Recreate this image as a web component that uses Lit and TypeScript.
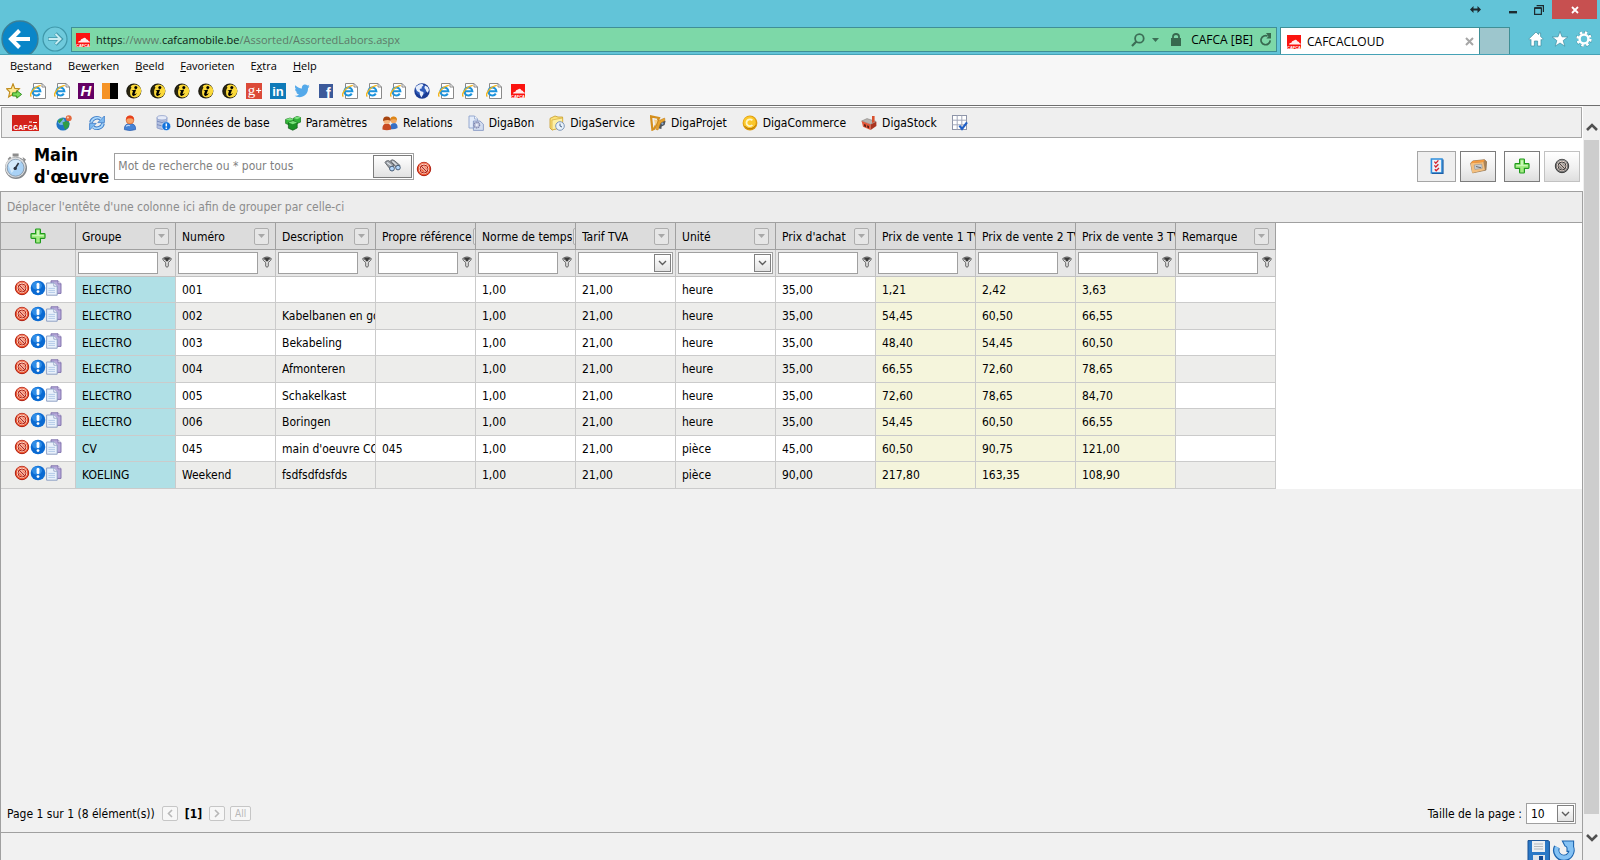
import { LitElement, html, css, svg, TemplateResult } from "lit";
import { customElement, state } from "lit/decorators.js";
import { classMap } from "lit/directives/class-map.js";

type Icon = TemplateResult;

const icon = (body: unknown, size = 16, box = 16): Icon =>
  html`<svg width=${size} height=${size} viewBox="0 0 ${box} ${box}" aria-hidden="true">${body}</svg>`;

/* ---------- browser icons ---------- */
const cafcaTile = () => icon(svg`
  <rect x="1" y="1" width="14" height="14" fill="#fb1410"/>
  <path d="M3 10.6 Q3 9 5.4 8.8 Q5.6 6.6 8 6.4 Q10 5 11.4 7.2 Q13.6 7.6 13.4 9 Q15 9.4 15 10.6 Z" fill="#fff" opacity=".92"/>
  <text x="8" y="15" text-anchor="middle" font-family="Liberation Sans" font-size="4" font-weight="700" fill="#fff">CAFCA</text>`);

const favStar = () => icon(svg`
  <path d="M7 .8 L8.8 5.4 L13.4 5.8 L10 9 L11 13.8 L7 11.2 L2.6 14 L3.8 9 L0.6 5.8 L5.2 5.4 Z" fill="#ffe896" stroke="#c08c1c" stroke-width="1.1"/>
  <path d="M6.6 9.8 h4.2 v-2.2 l4.8 3.8 l-4.8 3.8 v-2.2 h-4.2z" fill="#7bdc5a" stroke="#2b8a1c" stroke-width=".9"/>`);

const iePage = () => icon(svg`
  <path d="M3.5 .5 h8.5 l3.5 3.5 v11.5 h-12z" fill="#fff" stroke="#8a8a8a"/>
  <path d="M12 .5 v3.5 h3.5" fill="none" stroke="#8a8a8a"/>
  <path d="M2.6 8.2 H10.4 A4 4 0 1 0 9.8 10.6" fill="none" stroke="#1d93dc" stroke-width="2"/>
  <path d="M1.4 13.6 C-1.2 11.4 3.4 4 10.8 2.4" fill="none" stroke="#f3b51c" stroke-width="1.3"/>`);

const hTile = () => icon(svg`
  <rect width="16" height="16" fill="#640064"/>
  <text x="8" y="13.4" text-anchor="middle" font-family="Liberation Sans" font-size="15" font-weight="700" font-style="italic" fill="#fff">H</text>`);

const duoTile = () => icon(svg`<rect width="8" height="16" fill="#f59326"/><rect x="8" width="8" height="16" fill="#000"/>`);

const infoBall = () => icon(svg`
  <circle cx="7.8" cy="8" r="7.6" fill="#1c1a10"/><circle cx="8.8" cy="8" r="6.4" fill="#fbd93a"/>
  <path d="M2.6 12.6 Q-.4 7.4 4.4 2.8 L5.4 4.4 Q3 8 4.8 13.4 Z" fill="#2a260e"/>
  <circle cx="9.8" cy="4.4" r="1.5" fill="#000"/>
  <path d="M5.4 7.4 L10.2 6.6 L8.6 10.8 Q9 11.4 11 10 Q9.6 13.2 7.2 13 Q5.6 12.4 6.2 10.6 L7 8.2 Z" fill="#000"/>`);

const gPlus = () => icon(svg`
  <rect width="16" height="16" fill="#dc4a38"/>
  <text x="5.6" y="11.6" text-anchor="middle" font-family="Liberation Serif" font-size="15" fill="#fff">g</text>
  <path d="M10.2 7.5 h5 M12.7 5 v5" stroke="#fff" stroke-width="1.1"/>`);

const linkedIn = () => icon(svg`
  <rect width="16" height="16" fill="#0f7ab8"/>
  <text x="8" y="13" text-anchor="middle" font-family="Liberation Sans" font-size="13" font-weight="700" fill="#fff">in</text>`);

const bird = () => icon(svg`
  <path d="M15.5 3.6 L14 5.2 C14.2 10.6 10 14.2 5.4 14.2 C3.6 14.2 1.9 13.7 .6 12.8 C2.3 13 3.9 12.4 5.1 11.5 C3.7 11.4 2.6 10.5 2.2 9.3 L3.5 9.2 C2 8.8 1 7.6 1 6 L2.3 6.4 C1 5.4 .6 3.6 1.4 2.2 C3 4.1 5.4 5.4 8 5.5 C7.4 2.9 9.4 1.4 11 1.4 C12 1.4 12.8 1.8 13.4 2.4 L15.4 1.7 L14.2 3.3 Z" fill="#54a9ea"/>`);

const faceTile = () => icon(svg`
  <rect x="1" y="1" width="14" height="14" fill="#3c5a9a"/>
  <text x="10.4" y="15" text-anchor="middle" font-family="Liberation Sans" font-size="14" font-weight="700" fill="#fff">f</text>`);

const globe = () => icon(svg`
  <circle cx="8" cy="8" r="7.7" fill="#1b3c94"/><circle cx="7" cy="6.6" r="5.6" fill="#3d6fd2" opacity=".6"/>
  <path d="M1.4 4.6 Q4 .8 8.4 1 L9.4 2.6 L7.6 4 L8 5.2 L5.6 6 L6.4 8 L9.4 9 L9.4 11 L7.4 14.6 L6 12 L5.6 9.4 L3 8 Z M11 2.6 L13.8 4 L15 7 L13.8 9.8 L12.4 8.6 L11.6 6.6 L10.4 5Z" fill="#e6eefc"/>`);

/* ---------- application icons ---------- */
const cafcaLogo = () => html`<svg width="27" height="16" viewBox="0 0 27 16" role="img" aria-label="CAFCA">
  <rect width="27" height="16" fill="#d3221b"/>
  <path d="M17 7 h3 M21 7.5 h4" stroke="#fff" stroke-width="1"/>
  <text x="13.5" y="14.8" text-anchor="middle" font-family="Liberation Sans" font-size="7" font-weight="700" fill="#fff">CAFCA</text></svg>`;

const earth = () => icon(svg`
  <circle cx="7" cy="9" r="6.6" fill="#1f74c6"/><circle cx="5.4" cy="6.6" r="3.4" fill="#9cd2f4" opacity=".7"/>
  <path d="M1.6 6 Q4 2.6 7.4 3.4 L6 5.4 L3.4 8.4 Z M6.4 7.4 L10.6 6 L13.4 8 L12.6 12 L9 15 L8 12 Z" fill="#2f9c46"/>
  <circle cx="12.7" cy="3.3" r="3" fill="#e2683e"/><circle cx="11.9" cy="2.5" r="1.1" fill="#ffcdb0"/>`);

const refresh = () => icon(svg`
  <path d="M2 7.6 A6 5.6 0 0 1 11.6 4" fill="none" stroke="#3a7bc8" stroke-width="3.6"/>
  <path d="M14 8.4 A6 5.6 0 0 1 4.4 12" fill="none" stroke="#3a7bc8" stroke-width="3.6"/>
  <path d="M15.4 1 V7.6 H8.8 Z M.6 15 V8.4 H7.2 Z" fill="#7db9f0" stroke="#3a7bc8" stroke-width=".8"/>
  <path d="M2.2 7.4 A6 5.6 0 0 1 12 4 M13.8 8.6 A6 5.6 0 0 1 4 12" fill="none" stroke="#a9d6fa" stroke-width="1.8"/>`);

const person = () => icon(svg`
  <path d="M2.4 14.6 Q2 8.6 8 8.6 Q14 8.6 13.6 14.6 Q8 16.6 2.4 14.6Z" fill="#4583d6" stroke="#2a5cae" stroke-width=".7"/>
  <circle cx="8" cy="5" r="3.9" fill="#f6a468" stroke="#d8602c" stroke-width=".7"/>
  <path d="M4 5 Q4 .4 8 .4 Q12 .4 12 5 Q10 2.8 8 3.4 Q5.8 2.8 4 5Z" fill="#e8401c"/>
  <path d="M4 11.4 Q6 9.6 8 10.8" fill="none" stroke="#bcd8fa" stroke-width="1.2"/>`);

const database = () => icon(svg`
  <path d="M2 2.6 V13 Q7 16 12 13 V2.6Z" fill="#b3c0e0" stroke="#8495c4" stroke-width=".7"/>
  <ellipse cx="7" cy="2.8" rx="5" ry="2.2" fill="#e6ebf8" stroke="#8495c4" stroke-width=".7"/>
  <path d="M2 6.2 Q7 8.8 12 6.2 M2 9.6 Q7 12.2 12 9.6" fill="none" stroke="#7386ba" stroke-width=".9"/>
  <circle cx="11.3" cy="11.2" r="4.4" fill="#1272dc" stroke="#fff" stroke-width=".5"/>
  <path d="M11.3 8.4 V11.6 M11.3 12.6 V14" stroke="#fff" stroke-width="1.5"/>`);

const cubes = () => icon(svg`
  <path d="M8.6 3 L12 1.4 L15.8 2.6 V7 L12 8.6 L8.6 7Z" fill="#2fb238" stroke="#15701c" stroke-width=".7"/>
  <path d="M.6 4.4 L5 3 L8.6 4.4 V8.6 L4.6 10 L.6 8.4Z" fill="#34b83a" stroke="#15701c" stroke-width=".7"/>
  <path d="M3.4 7.6 L8 6 L12.2 7.6 V13 L7.8 15.2 L3.4 13.2Z" fill="#1b9226" stroke="#0f5a18" stroke-width=".7"/>
  <path d="M3.4 7.6 L7.8 9.2 L12.2 7.6 L8 6Z M.6 4.4 L4.6 5.6 L8.6 4.4 L5 3Z M8.6 3 L12 4.2 L15.8 2.6 L12 1.4Z" fill="#7be07c"/>`);

const people = () => icon(svg`
  <path d="M8 14 Q8 8 11.8 8 Q15.8 8 15.6 13 Q12 15 8 14Z" fill="#3770c6"/>
  <circle cx="11.6" cy="5" r="3.2" fill="#f2a862"/><path d="M8.2 5 Q8.2 1.4 11.6 1.4 Q15 1.4 15 5.4 Q13 3.4 8.2 5Z" fill="#dd8618"/>
  <path d="M.4 14.4 Q.2 8.6 4.8 8.6 Q9.4 8.6 9.2 14.4 Q4.8 16 .4 14.4Z" fill="#c84a22"/>
  <circle cx="4.8" cy="5.6" r="3.5" fill="#f6b47c"/><path d="M1 6 Q1 1.6 4.8 1.6 Q8.6 1.6 8.6 6 Q6.4 3.8 1 6Z" fill="#a64410"/>`);

const gearPages = () => icon(svg`
  <path d="M1 1 h5.6 l3 3 v9 h-8.6z" fill="#e4ecfa" stroke="#8da2cc" stroke-width=".9"/>
  <path d="M6.6 1 v3 h3" fill="#fff" stroke="#8da2cc" stroke-width=".8"/>
  <path d="M5.4 6 h6.6 l3.4 3.2 v6.2 h-10z" fill="#d3ddf0" stroke="#7d91be" stroke-width=".8"/>
  <circle cx="8.8" cy="10" r="2.9" fill="#c2c8e0" stroke="#8087ae" stroke-width="1.2" stroke-dasharray="1.4 .6"/><circle cx="8.8" cy="10" r="1" fill="#f2f5fb"/>`);

const folderClock = () => icon(svg`
  <path d="M1 3.4 L6 1 L9 2 H13.6 V12 L3 15 L1 13Z" fill="#fbe27a" stroke="#c79a26" stroke-width=".8"/>
  <path d="M3 5 L13.6 3 V12 L3 15Z" fill="#fdf0a4" stroke="#d3a93a" stroke-width=".7"/>
  <circle cx="11" cy="11" r="4.3" fill="#e9f2fb" stroke="#7c96b8" stroke-width="1"/><path d="M11 8.6 V11 L13 12" fill="none" stroke="#35557c" stroke-width=".9"/>`);

const projectIcon = () => icon(svg`
  <path d="M1 1.4 L9 3 L7.6 6 L4.4 13.6 L2.4 14.6Z" fill="none" stroke="#d58f1c" stroke-width="2.2"/>
  <path d="M4 4.4 L8 5.4 L5.4 11Z" fill="#f6d088"/>
  <path d="M9 10 L12 5.6 L15.6 6 L14.6 10 L11.6 11.6 L11.4 14 L9 13.6Z" fill="#4e555e"/>
  <path d="M8 6 L14.6 3 L15 5.6 L10.6 8 L8 15 L6 14.4Z" fill="#e8a42c" stroke="#b87414" stroke-width=".5"/><circle cx="12.4" cy="8.6" r="1.1" fill="#8fb0d6"/>`);

const coin = () => icon(svg`
  <circle cx="8" cy="8" r="7.4" fill="#dd9a0c"/><circle cx="7.6" cy="7.4" r="6.2" fill="#fbc82c"/>
  <path d="M10.4 5.4 A3.4 3.4 0 1 0 10.4 10" fill="none" stroke="#fff6c8" stroke-width="1.8"/>
  <path d="M2.6 11 A6.6 6.6 0 0 0 13.6 10.4" fill="none" stroke="#b87806" stroke-width="1"/>`);

const factory = () => icon(svg`
  <path d="M.6 6 L6 3.6 L15 6.4 L9.6 9.4Z" fill="#b8b4b0" stroke="#7a7672" stroke-width=".5"/>
  <path d="M.6 6 L9.6 9.4 V15 L2 11.8Z" fill="#e2573a"/><path d="M9.6 9.4 L15.4 6.4 V11 L9.6 15Z" fill="#a93420"/>
  <path d="M11 1 h2.6 v6 l-2.6 1z" fill="#d8502e"/><path d="M3 9 l2 .8 v2.4 l-2 -.9z M6.2 10.2 l1.8 .7 v2.5 l-1.8 -.8z" fill="#5c2418"/>`);

const gridCheck = () => icon(svg`
  <rect x=".5" y=".5" width="14" height="14" fill="#fff" stroke="#8d94a8"/>
  <path d="M.5 5.2 H14.5 M.5 9.8 H14.5 M5.2 .5 V14.5 M9.8 .5 V14.5" stroke="#a3a9ba" stroke-width="1"/>
  <path d="M7.4 10.6 L10 14 L15 7.4" fill="none" stroke="#1f5fc6" stroke-width="2.2"/>`);

const stopwatch = () => icon(svg`
  <path d="M8.6 .6 h6 v3 h-6z M18.6 4 l3.4 2.4 -2 3z M3.6 6 l2.4 -2.4 2 2 -2 3z" fill="#8d8d8d"/>
  <rect x="10" y="3" width="3.4" height="3" fill="#b4b4b4"/>
  <circle cx="12" cy="15" r="11" fill="#85898d"/><circle cx="11.4" cy="14.4" r="10.2" fill="#dcdee0"/>
  <circle cx="11.6" cy="14.8" r="8.4" fill="#a9d2f6" stroke="#7a8ea2" stroke-width=".8"/>
  <path d="M4.4 12 A8 8 0 0 1 17 8.6 L7.6 20Z" fill="#dff0fd" opacity=".8"/>
  <path d="M10.8 16 L14.6 10" stroke="#2c3440" stroke-width="1.6"/><circle cx="11.2" cy="15.4" r="1.7" fill="#2c3440"/>`, 26, 26);

const forbid = (light = "#ffa48c", main = "#ee5a34", dark = "#b01f12") => icon(svg`
  <circle cx="8" cy="8" r="6.7" fill=${main} stroke=${dark} stroke-width="1"/>
  <ellipse cx="8" cy="4.6" rx="5" ry="3" fill=${light} opacity=".6"/>
  <circle cx="8" cy="8" r="4" fill="none" stroke="#ffe9de" stroke-width="2.2"/>
  <path d="M5 5 L11 11" stroke="#ffe9de" stroke-width="2.6"/>
  <circle cx="8" cy="8" r="4" fill="none" stroke=${dark} stroke-width="1"/>
  <path d="M5.2 5.2 L10.8 10.8" stroke=${dark} stroke-width="1.1"/>`);

const infoBlue = () => icon(svg`
  <circle cx="8" cy="8" r="7.3" fill="#0a6ad2"/><ellipse cx="7" cy="5.6" rx="5" ry="4" fill="#3f9cf0" opacity=".7"/>
  <rect x="6.6" y="3" width="2.8" height="6" rx="1.2" fill="#fff"/><circle cx="8" cy="11.6" r="1.4" fill="#fff"/>`);

const copyPages = () => icon(svg`
  <path d="M5 .8 h7 l3 3 v9.6 h-10z" fill="#b6a9da" stroke="#7a6ca8" stroke-width=".9"/>
  <path d="M12 .8 v3 h3" fill="#efeafa" stroke="#7a6ca8" stroke-width=".8"/>
  <path d="M.6 3 h7.2 l3.4 3.2 v9 h-10.6z" fill="#e9f1fb" stroke="#8698c0" stroke-width=".9"/>
  <path d="M7.8 3 v3.2 h3.4" fill="#fff" stroke="#8698c0" stroke-width=".8"/>
  <path d="M2.4 8.4 h6.6 M2.4 10.4 h6.6 M2.4 12.4 h6.6" stroke="#b3cbe8" stroke-width="1"/>`);

const plus = () => icon(svg`
  <path d="M5.6 1.8 Q5.6 1 6.4 1 H9.6 Q10.4 1 10.4 1.8 V5.6 H14.2 Q15 5.6 15 6.4 V9.6 Q15 10.4 14.2 10.4 H10.4 V14.2 Q10.4 15 9.6 15 H6.4 Q5.6 15 5.6 14.2 V10.4 H1.8 Q1 10.4 1 9.6 V6.4 Q1 5.6 1.8 5.6 H5.6Z" fill="#a4ec84" stroke="#1f9a1c" stroke-width="1.2"/>
  <path d="M7 2.4 H9 V7 H13.6 V8 H2.4 V7 H7Z" fill="#c9f8b8"/>`);

const checklist = () => icon(svg`
  <path d="M2.4 1 H13 V15 H2.4Z" fill="#eef2f8" stroke="#2f8fdc" stroke-width="1.6"/><path d="M14 1.6 V15.4 H3" fill="none" stroke="#1c5fa8" stroke-width="1.2"/>
  <path d="M5.4 3.6 L6.8 5.2 L9.4 2.4 M5.4 7.4 L6.8 9 L9.4 6.2 M5.8 11.2 L7.2 12.8 L10 10" fill="none" stroke="#d3222c" stroke-width="1.3"/>`);

const box = () => icon(svg`
  <path d="M.6 5 L2.4 14 L15 11.4 L15.6 3.4 L13.6 1.6 L2.6 2.8Z" fill="#a9845a" stroke="#8c6a44" stroke-width=".7"/>
  <path d="M.6 5 L12.6 3.8 L14 11.2 L2.2 14Z" fill="#f3c080"/><path d="M.6 5 L2.6 2.8 L14 1.6 L12.6 3.8Z" fill="#f59a3c"/>
  <path d="M4 6.6 L11 5.8 L11.6 9.6 L4.6 10.8Z" fill="#c8cdd2" stroke="#8b8d90" stroke-width=".5"/><path d="M5.6 8 L10.4 9.2" stroke="#666" stroke-width=".9"/>`, 17);

const binoculars = () => icon(svg`
  <path d="M1 4.6 Q1.6 2.4 4.6 2.6 L9.6 6.4 L8.6 12.6 Q6 12.4 4.8 9.4Z M6.4 2.8 Q8 .8 10.4 2.6 L16 7.4 L14 11.6 L10.8 8Z" fill="#999ea4" stroke="#55595f" stroke-width=".8"/>
  <path d="M3 4.4 L7.6 7.8 M8.4 3.2 L12.6 7" stroke="#dfe3e8" stroke-width="1.2"/>
  <circle cx="8" cy="10.6" r="2.4" fill="#b4d6fa" stroke="#3d526c" stroke-width=".9"/><circle cx="14" cy="9.6" r="2.3" fill="#b4d6fa" stroke="#3d526c" stroke-width=".9"/>`, 17, 17);

const filter = () => html`<svg width="10" height="12" viewBox="0 0 10 12" aria-hidden="true">
  <path d="M.7 2.6 Q5 -.6 9.3 2.6 Q9.4 4.4 6.2 6.4 V10.4 Q5 12 3.8 10.4 V6.4 Q.6 4.4 .7 2.6Z" fill="#fff" stroke="#555" stroke-width="1"/>
  <path d="M1.6 2.8 Q5 .2 8.4 2.8 L7.6 3.8 H2.4Z" fill="#3c3c3c"/><circle cx="5" cy="4" r="1.6" fill="#3c3c3c"/></svg>`;

const triangle = () => html`<svg width="7" height="4" viewBox="0 0 7 4" aria-hidden="true"><path d="M0 0 H7 L3.5 4Z" fill="#a8a8a8"/></svg>`;

const chevron = (d: string, color: string, w: number, h: number, sw = 1.4) =>
  html`<svg width=${w} height=${h} viewBox="0 0 ${w} ${h}" aria-hidden="true"><path d=${d} fill="none" stroke=${color} stroke-width=${sw}/></svg>`;

const floppy = () => icon(svg`
  <path d="M1 .6 H21.4 L22.4 1.6 V23 H1Z" fill="#2a78c6" stroke="#174f92" stroke-width="1"/>
  <rect x="5" y="1" width="13" height="11" fill="#eceff2"/><path d="M7 4 H16 M7 6.5 H16 M7 9 H16" stroke="#b4b9be" stroke-width="1"/>
  <rect x="6" y="15" width="12" height="8" fill="#dfe5ea"/><rect x="12" y="16" width="4" height="7" fill="#124a94"/>`, 24, 24);

const undo = () => icon(svg`
  <path d="M5 7 A7.6 7.6 0 1 0 18.6 7" fill="none" stroke="#1c64ae" stroke-width="6.4"/>
  <path d="M10.4 1 H21.6 V11.4 H15 V8 Q15 6.4 13 6Z" fill="#84c2f4" stroke="#1c64ae" stroke-width="1.1"/>
  <path d="M5 7 A7.6 7.6 0 1 0 18.4 6" fill="none" stroke="#84c2f4" stroke-width="4.2"/>`, 24, 24);

/* ---------- data ---------- */
interface Column { label: string; kind?: "select"; tone?: string; }

const columns: Column[] = [
  { label: "Groupe", tone: "blue" },
  { label: "Numéro" },
  { label: "Description" },
  { label: "Propre référence" },
  { label: "Norme de temps" },
  { label: "Tarif TVA", kind: "select" },
  { label: "Unité", kind: "select" },
  { label: "Prix d'achat" },
  { label: "Prix de vente 1 TV", tone: "beige" },
  { label: "Prix de vente 2 TV", tone: "beige" },
  { label: "Prix de vente 3 TV", tone: "beige" },
  { label: "Remarque" },
];

const rows: string[][] = [
  ["ELECTRO", "001", "", "", "1,00", "21,00", "heure", "35,00", "1,21", "2,42", "3,63", ""],
  ["ELECTRO", "002", "Kabelbanen en go", "", "1,00", "21,00", "heure", "35,00", "54,45", "60,50", "66,55", ""],
  ["ELECTRO", "003", "Bekabeling", "", "1,00", "21,00", "heure", "35,00", "48,40", "54,45", "60,50", ""],
  ["ELECTRO", "004", "Afmonteren", "", "1,00", "21,00", "heure", "35,00", "66,55", "72,60", "78,65", ""],
  ["ELECTRO", "005", "Schakelkast", "", "1,00", "21,00", "heure", "35,00", "72,60", "78,65", "84,70", ""],
  ["ELECTRO", "006", "Boringen", "", "1,00", "21,00", "heure", "35,00", "54,45", "60,50", "66,55", ""],
  ["CV", "045", "main d'oeuvre CC", "045", "1,00", "21,00", "pièce", "45,00", "60,50", "90,75", "121,00", ""],
  ["KOELING", "Weekend", "fsdfsdfdsfds", "", "1,00", "21,00", "pièce", "90,00", "217,80", "163,35", "108,90", ""],
];

const reset = css`
  *, *::before, *::after { box-sizing: border-box; }
  svg { display: block; flex: none; }
  button, input, select { font: inherit; color: inherit; margin: 0; padding: 0; border: 0; background: none; border-radius: 0; }
  a { color: inherit; text-decoration: none; }
`;

/* ---------- browser frame ---------- */
@customElement("browser-chrome")
class BrowserChrome extends LitElement {
  static styles = [reset, css`
    :host { display: block; font: 12px/16px "Open Sans", "Noto Sans", sans-serif; color: #000; background: #f7f7f7; border-bottom: 1px solid #6e6e6e; }
    .top { display: flex; height: 55px; background: #62c4d8; border-bottom: 1px solid #46a2b6; overflow: hidden; }
    .nav { display: flex; align-items: center; gap: 3px; height: 58px; padding: 20px 3px 0 1px; }
    .main { display: flex; flex: 1; gap: 3px; padding-top: 27px; min-width: 0; }
    .address { flex: 1; display: flex; align-items: center; gap: 5px; height: 25px; padding: 0 4px 0 3px; background: #7dd8a8; border: 1px solid #3f8f96; min-width: 0; }
    .url { flex: 1; color: #5d7a68; white-space: nowrap; font-size: 11px; }
    .url b { color: #0c1a12; font-weight: 400; }
    .tools { display: flex; align-items: center; gap: 7px; }
    .tab { display: flex; align-items: center; gap: 5px; width: 200px; height: 28px; padding: 0 5px; background: #fff; border: 1px solid #3f8f96; border-bottom: 0; }
    .tab span { flex: 1; }
    .newtab { width: 30px; height: 28px; margin-left: -3px; background: #9dc6cd; border: 1px solid #3f8f96; border-left: 0; border-bottom: 0; }
    .side { display: flex; flex-direction: column; width: 90px; align-items: flex-end; }
    .caption { display: flex; align-items: flex-start; height: 27px; justify-content: flex-end; width: 150px; padding-right: 3px; }
    .caption button { display: flex; align-items: center; justify-content: center; width: 26px; height: 19px; }
    .caption .wide { width: 50px; }
    .caption .close { width: 45px; background: #c75050; }
    .quick { display: flex; gap: 8px; padding: 4px 8px 0 0; }
    .menu { display: flex; gap: 16px; padding: 3px 10px; height: 24px; font-size: 11px; }
    .marks { display: flex; align-items: center; gap: 8px; padding: 0 6px; height: 24px; margin-bottom: 2px; }
    u { text-underline-offset: 1px; }
  `];

  render() {
    const marks = [favStar, iePage, iePage, hTile, duoTile, infoBall, infoBall, infoBall, infoBall, infoBall, gPlus, linkedIn, bird, faceTile, iePage, iePage, iePage, globe, iePage, iePage, iePage, cafcaTile];
    return html`
      <div class="top">
        <div class="nav">
          <button aria-label="Terug"><svg width="38" height="38" viewBox="0 0 38 38"><circle cx="19" cy="19" r="18" fill="#0a86c8" stroke="#3b7f96" stroke-width="1.4"/><path d="M29 19 H11 M18.5 10.5 L10 19 L18.5 27.5" fill="none" stroke="#fff" stroke-width="4"/></svg></button>
          <button aria-label="Vooruit"><svg width="26" height="26" viewBox="0 0 26 26"><circle cx="13" cy="13" r="12" fill="#6fcadc" stroke="#3f97a9" stroke-width="1.2"/><path d="M6 13 H19 M13.5 7.5 L19 13 L13.5 18.5" fill="none" stroke="#3f97a9" stroke-width="3.6"/><path d="M6.6 13 H18.4 M13.5 8 L18.5 13 L13.5 18" fill="none" stroke="#c9ecf2" stroke-width="2"/></svg></button>
        </div>
        <div class="main">
          <div class="address">
            ${cafcaTile()}
            <span class="url"><b>https</b>://www.<b>cafcamobile.be</b>/Assorted/AssortedLabors.aspx</span>
            <div class="tools">
              <svg width="14" height="14" viewBox="0 0 14 14"><circle cx="8.4" cy="5.4" r="4.3" fill="none" stroke="#3c6e56" stroke-width="1.8"/><path d="M5.4 8.4 L1 13" stroke="#3c6e56" stroke-width="2.2"/></svg>
              <svg width="7" height="4" viewBox="0 0 7 4"><path d="M0 0 H7 L3.5 4Z" fill="#3c6e56"/></svg>
              <svg width="18" height="13" viewBox="0 0 18 13"><path d="M5 5 H15 V13 H5Z" fill="#38694f"/><path d="M7 6 V3.6 Q7 1 10 1 Q13 1 13 3.6 V6" fill="none" stroke="#38694f" stroke-width="1.8"/></svg>
              <span>CAFCA [BE]</span>
              <svg width="12" height="13" viewBox="0 0 12 13"><path d="M10.2 7.4 A4.6 4.6 0 1 1 7.6 3" fill="none" stroke="#38694f" stroke-width="1.7"/><path d="M6 0 H11 V5.4 H6.4 L8.4 3.2Z" fill="#38694f"/></svg>
            </div>
          </div>
          <div class="tab">${cafcaTile()}<span>CAFCACLOUD</span>
            <button aria-label="Tabblad sluiten">${chevron("M1 1 L8 8 M8 1 L1 8", "#a6a6a6", 9, 9, 2)}</button></div>
          <button class="newtab" aria-label="Nieuw tabblad"></button>
        </div>
        <div class="side">
          <div class="caption">
            <button class="wide" aria-label="Volledig scherm"><svg width="11" height="7" viewBox="0 0 11 7"><path d="M0 3.5 L3.5 0 V2.6 H7.5 V0 L11 3.5 L7.5 7 V4.4 H3.5 V7Z" fill="#1d2b30"/></svg></button>
            <button aria-label="Minimaliseren"><svg width="8" height="8" viewBox="0 0 8 8"><rect y="5" width="8" height="2.4" fill="#1d2b30"/></svg></button>
            <button aria-label="Verkleinen"><svg width="10" height="10" viewBox="0 0 10 10"><path d="M.6 3 H7.4 V9.4 H.6Z M2.6 .6 H9.4 V7" fill="none" stroke="#1d2b30" stroke-width="1.2"/><path d="M.5 3 H7.5" stroke="#1d2b30" stroke-width="1.8"/></svg></button>
            <button class="close" aria-label="Sluiten">${chevron("M1 1 L7 7 M7 1 L1 7", "#fff", 8, 8, 1.8)}</button>
          </div>
          <div class="quick">
            ${icon(svg`<path d="M8 1 L.8 8 L2 9.2 L3 8.4 V15 H6.4 V10 H9.6 V15 H13 V8.4 L14 9.2 L15.2 8 L12.6 5.4 V2 H10.6 V3.6Z" fill="#fff" stroke="#3d8ea0" stroke-width=".7"/>`)}
            ${icon(svg`<path d="M8 .4 L10 5.8 L15.8 6 L11.2 9.6 L12.8 15.2 L8 12 L3.2 15.2 L4.8 9.6 L.2 6 L6 5.8Z" fill="#fff" stroke="#3d8ea0" stroke-width=".7"/>`)}
            ${icon(svg`<circle cx="8" cy="8" r="6.6" fill="none" stroke="#3d8ea0" stroke-width="3" stroke-dasharray="3.2 1.98"/><circle cx="8" cy="8" r="6.4" fill="none" stroke="#fff" stroke-width="2.6" stroke-dasharray="2.5 2.52"/><circle cx="8" cy="8" r="4.4" fill="none" stroke="#fff" stroke-width="2.4"/>`)}
          </div>
        </div>
      </div>
      <nav class="menu">
        <a href="#">B<u>e</u>stand</a><a href="#">Be<u>w</u>erken</a><a href="#"><u>B</u>eeld</a><a href="#"><u>F</u>avorieten</a><a href="#">E<u>x</u>tra</a><a href="#"><u>H</u>elp</a>
      </nav>
      <div class="marks">${marks.map((m) => m())}</div>
    `;
  }
}

/* ---------- labour grid ---------- */
@customElement("labor-grid")
class LaborGrid extends LitElement {
  @state() private filters: string[] = columns.map(() => "");

  static styles = [reset, css`
    :host { display: flex; flex-direction: column; flex: 1; border: 1px solid #a0a0a0; border-bottom: 0; background: #f1f1f1; min-width: 0; }
    .group { height: 30px; padding: 0 6px; line-height: 31px; color: #8c8c8c; background: #ededed; }
    .sheet { background: #fff; border-top: 1px solid #a0a0a0; overflow: hidden; }
    table { table-layout: fixed; width: 1275px; border-collapse: separate; border-spacing: 0; }
    .c-tools { width: 75px; }
    .c-data { width: 100px; }
    th, td { padding: 0; border: solid #cbcbcb; border-width: 0 1px 1px 0; font-weight: 400; text-align: left; overflow: hidden; white-space: nowrap; }
    .heads th { height: 27px; background: #dcdcdc; border-color: #a0a0a0; }
    .head { display: flex; align-items: center; justify-content: space-between; gap: 1px; width: 99px; padding: 0 6px; }
    .head span { flex: none; max-width: 93px; overflow: hidden; padding-top: 2px; }
    .drop { display: flex; flex: none; align-items: center; justify-content: center; width: 15px; height: 17px; border: 1px solid #aeaeae; border-radius: 2px; background: #e6e6e6; }
    .filters td { height: 27px; background: #e7e7e7; border-color: #c2c2c2; }
    .filter { display: flex; align-items: center; gap: 4px; padding: 0 2px; }
    .filter input { width: 80px; height: 22px; padding: 0 3px; background: #fff; border: 1px solid #a0a0a0; }
    .filter button { display: flex; padding-bottom: 2px; }
    .pick { display: grid; align-items: center; width: 95px; height: 22px; background: #fff; border: 1px solid #a0a0a0; }
    .pick select { grid-area: 1 / 1; appearance: none; width: 100%; height: 20px; padding: 0 4px; }
    .arrow { grid-area: 1 / 1; justify-self: end; display: flex; align-items: center; justify-content: center; width: 17px; height: 18px; margin-right: 1px; border: 1px solid #808080; background: linear-gradient(#fff, #e2e2e2); pointer-events: none; }
    .center { display: flex; justify-content: center; align-items: center; }
    .row td { height: 26px; padding: 0 0 0 6px; line-height: 16px; background: #fff; }
    .row.alt td { height: 27px; background: #ededeb; }
    .row td.blue { background: #b0e0e6; }
    .row td.beige { background: #f5f5dc; }
    .row td.tools { padding: 0 0 4px; }
    .row .center button { display: block; }
    .pager { display: flex; align-items: center; gap: 5px; margin-top: auto; padding: 0 6px 1px; height: 37px; border-bottom: 1px solid #a0a0a0; }
    .pager .count { margin-right: 2px; }
    .pager .page { font-weight: 700; padding: 0 2px; }
    .pager button { display: flex; align-items: center; justify-content: center; min-width: 16px; height: 15px; border: 1px solid #c6c6c6; border-radius: 2px; background: #f7f7f7; color: #b8b8b8; font-size: 10px; }
    .pager .all { width: 21px; }
    .size { display: flex; align-items: center; gap: 4px; margin-left: auto; }
    .size .pick { width: 50px; height: 21px; }
    .size .pick select { height: 19px; }
    .size .arrow { height: 17px; }
    .foot { display: flex; justify-content: flex-end; gap: 1px; height: 27px; padding: 7px 6px 0; overflow: hidden; }
    .foot button { display: block; height: 24px; }
  `];

  private onFilter(i: number, e: Event) {
    const next = [...this.filters];
    next[i] = (e.target as HTMLInputElement).value;
    this.filters = next;
  }

  private visible() {
    return rows.filter((r) => this.filters.every((f, i) => !f || r[i].toLowerCase().includes(f.toLowerCase())));
  }

  render() {
    const down = () => chevron("M1 1 L4.5 4.5 L8 1", "#5c5c5c", 9, 6);
    return html`
      <div class="group">Déplacer l'entête d'une colonne ici afin de grouper par celle-ci</div>
      <div class="sheet">
        <table>
          <colgroup><col class="c-tools">${columns.map(() => html`<col class="c-data">`)}</colgroup>
          <thead>
            <tr class="heads">
              <th><div class="center"><button aria-label="Ajouter">${plus()}</button></div></th>
              ${columns.map((c) => html`<th scope="col"><div class="head"><span>${c.label}</span><button class="drop" aria-label="Filtrer ${c.label}">${triangle()}</button></div></th>`)}
            </tr>
            <tr class="filters">
              <td></td>
              ${columns.map((c, i) => html`<td><div class="filter">${c.kind === "select"
                ? html`<div class="pick"><select aria-label="Filtre ${c.label}" @change=${(e: Event) => this.onFilter(i, e)}><option value=""></option>${[...new Set(rows.map((r) => r[i]))].map((v) => html`<option>${v}</option>`)}</select><span class="arrow">${down()}</span></div>`
                : html`<input type="text" aria-label="Filtre ${c.label}" @input=${(e: Event) => this.onFilter(i, e)}><button aria-label="Condition ${c.label}">${filter()}</button>`}</div></td>`)}
            </tr>
          </thead>
          <tbody>
            ${this.visible().map((r, n) => html`<tr class=${classMap({ row: true, alt: n % 2 === 1 })}>
              <td class="tools"><div class="center"><button aria-label="Supprimer">${forbid()}</button><button aria-label="Détails">${infoBlue()}</button><button aria-label="Copier">${copyPages()}</button></div></td>
              ${r.map((v, i) => html`<td class=${columns[i].tone ?? ""}>${v}</td>`)}
            </tr>`)}
          </tbody>
        </table>
      </div>
      <div class="pager">
        <span class="count">Page 1 sur 1 (8 élément(s))</span>
        <button aria-label="Page précédente">${chevron("M5 1 L1.5 4.5 L5 8", "#b8b8b8", 6, 9, 1.6)}</button>
        <span class="page">[1]</span>
        <button aria-label="Page suivante">${chevron("M1 1 L4.5 4.5 L1 8", "#b8b8b8", 6, 9, 1.6)}</button>
        <button class="all">All</button>
        <div class="size"><label for="size">Taille de la page :</label>
          <div class="pick"><select id="size"><option>10</option><option>20</option><option>50</option></select><span class="arrow">${down()}</span></div></div>
      </div>
      <div class="foot"><button aria-label="Enregistrer">${floppy()}</button><button aria-label="Annuler">${undo()}</button></div>
    `;
  }
}

@customElement("app-root")
class AppRoot extends LitElement {
  static styles = [reset, css`
    :host { display: flex; flex-direction: column; height: 100vh; overflow: hidden; font: 12px/16px "DejaVu Sans Condensed", "DejaVu Sans", sans-serif; color: #000; background: #fff; }
    .view { display: flex; flex: 1; min-height: 0; }
    .page { display: flex; flex-direction: column; flex: 1; min-width: 0; }
    .bar { display: flex; align-items: center; gap: 15px; height: 31px; margin: 1px 1px 0; padding: 0 10px; background: #efefef; border: 1px solid #a6a6a6; }
    .bar a { display: flex; align-items: center; gap: 5px; white-space: nowrap; }
    .bar .lone { margin-right: 2px; }
    .title { display: flex; align-items: center; height: 53px; padding: 3px 3px 0 4px; }
    h1 { width: min-content; margin: 0 5px 0 4px; font-size: 18px; line-height: 22px; font-weight: 700; }
    .search { display: flex; align-items: center; width: 300px; height: 27px; padding: 0 1px 0 3px; border: 1px solid #a0a0a0; background: #fff; }
    .search input { flex: 1; min-width: 0; height: 23px; outline: 0; }
    .search input::placeholder { color: #808080; opacity: 1; }
    .search button { display: flex; align-items: center; justify-content: center; width: 39px; height: 23px; border: 1px solid #7c7c7c; background: linear-gradient(#fff, #e2e2e2); }
    .clear { margin: 6px 0 0 2px; }
    .actions { display: flex; gap: 4px; margin-left: auto; }
    .actions button { display: flex; align-items: center; justify-content: center; width: 36px; height: 31px; border: 1px solid #7c7c7c; background: linear-gradient(#fff, #f0f0f0 55%, #dedede); }
    .actions .flat { width: 39px; background: #efefef; border-color: #a6a6a6; }
    .actions .add { margin-left: 4px; }
    .actions .off { border-color: #c2c2c2; }
    .scroll { display: flex; flex-direction: column; align-items: center; width: 17px; background: #f0f0f0; }
    .scroll button { display: flex; align-items: center; justify-content: center; width: 17px; height: 34px; padding-top: 8px; }
    .scroll .down { height: 46px; padding: 0; }
    .thumb { flex: 1; width: 15px; background: #cdcdcd; }
  `];

  render() {
    const item = (ic: Icon, label: string) => html`<a href="#">${ic}<span>${label}</span></a>`;
    const lone = (ic: Icon, name: string) => html`<a class="lone" href="#" aria-label=${name}>${ic}</a>`;
    return html`
      <browser-chrome></browser-chrome>
      <div class="view">
        <main class="page">
          <nav class="bar">
            ${lone(cafcaLogo(), "CAFCA")}${lone(earth(), "Langue")}${lone(refresh(), "Actualiser")}${lone(person(), "Utilisateur")}
            ${item(database(), "Données de base")}${item(cubes(), "Paramètres")}${item(people(), "Relations")}${item(gearPages(), "DigaBon")}
            ${item(folderClock(), "DigaService")}${item(projectIcon(), "DigaProjet")}${item(coin(), "DigaCommerce")}${item(factory(), "DigaStock")}${lone(gridCheck(), "Tableau")}
          </nav>
          <div class="title">
            ${stopwatch()}
            <h1>Main d'œuvre</h1>
            <div class="search"><input type="text" aria-label="Recherche" placeholder="Mot de recherche ou * pour tous"><button aria-label="Rechercher">${binoculars()}</button></div>
            <button class="clear" aria-label="Effacer">${forbid()}</button>
            <div class="actions">
              <button class="flat" aria-label="Sélection">${checklist()}</button>
              <button aria-label="Archives">${box()}</button>
              <button class="add" aria-label="Ajouter">${plus()}</button>
              <button class="off" aria-label="Annuler">${forbid("#a8a8a8", "#7a7a7a", "#3c3c3c")}</button>
            </div>
          </div>
          <labor-grid></labor-grid>
        </main>
        <div class="scroll">
          <button aria-label="Défiler vers le haut">${chevron("M1 7 L6 2 L11 7", "#505050", 12, 9, 2.6)}</button>
          <div class="thumb"></div>
          <button class="down" aria-label="Défiler vers le bas">${chevron("M1 2 L6 7 L11 2", "#505050", 12, 9, 2.6)}</button>
        </div>
      </div>
    `;
  }
}
